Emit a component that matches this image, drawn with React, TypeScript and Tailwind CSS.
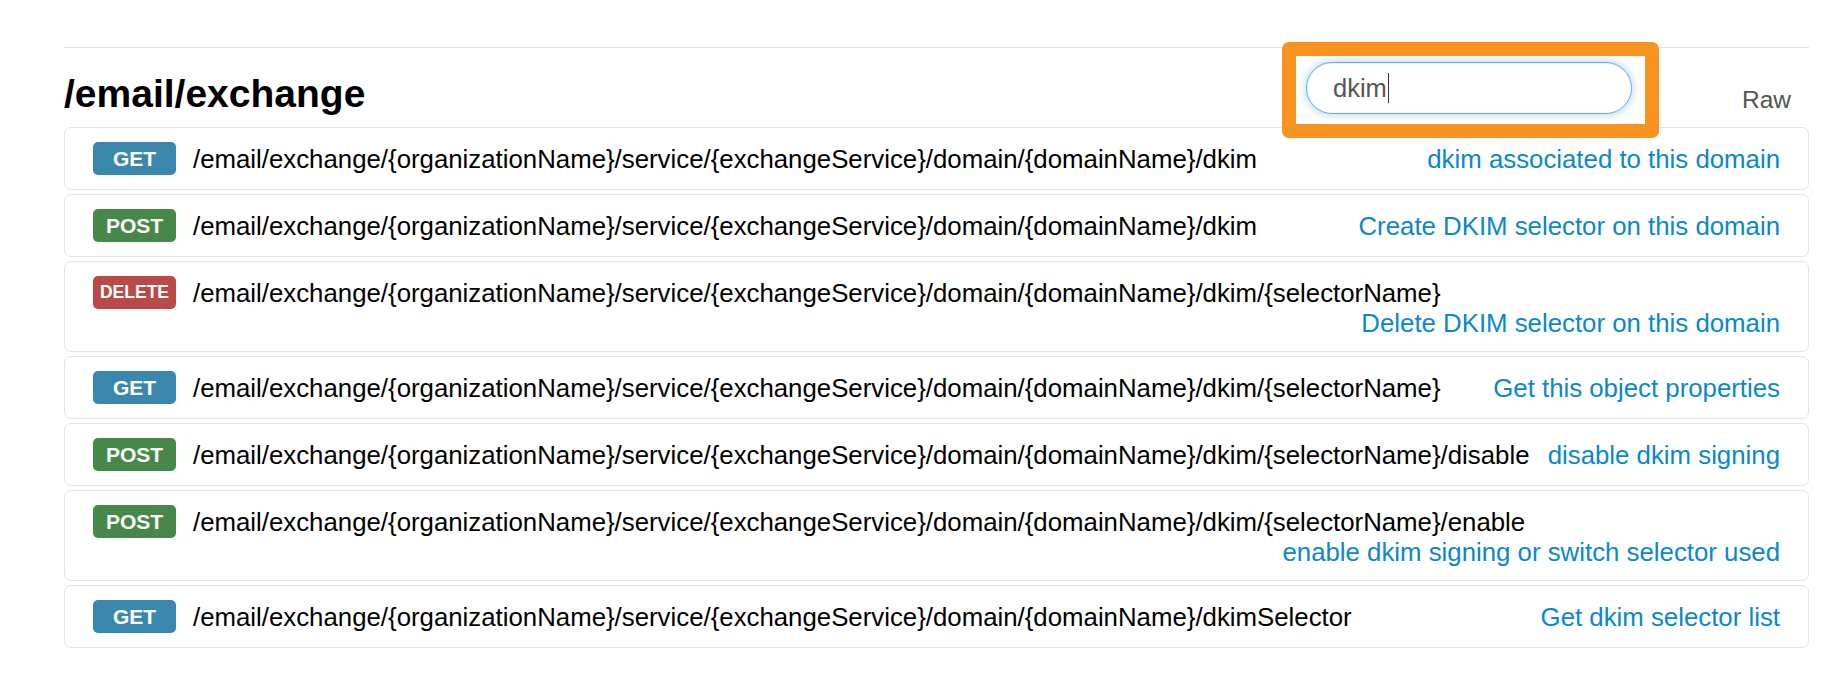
const base = "/email/exchange/{organizationName}/service/{exchangeService}/domain/{domainName}";

const endpoints = [
  { method: "GET", path: `${base}/dkim`, desc: "dkim associated to this domain" },
  { method: "POST", path: `${base}/dkim`, desc: "Create DKIM selector on this domain" },
  { method: "DELETE", path: `${base}/dkim/{selectorName}`, desc: "Delete DKIM selector on this domain" },
  { method: "GET", path: `${base}/dkim/{selectorName}`, desc: "Get this object properties" },
  { method: "POST", path: `${base}/dkim/{selectorName}/disable`, desc: "disable dkim signing" },
  { method: "POST", path: `${base}/dkim/{selectorName}/enable`, desc: "enable dkim signing or switch selector used" },
  { method: "GET", path: `${base}/dkimSelector`, desc: "Get dkim selector list" },
];

const methodStyles: Record<string, string> = {
  GET: "bg-[#3a87ad] text-[21px]",
  POST: "bg-[#468847] text-[21px]",
  DELETE: "bg-[#b94a48] text-[17.5px]",
};

const MethodBadge = ({ method }: { method: string }) => (
  <span
    className={`w-[83px] h-[33px] rounded-[5px] flex items-center justify-center shrink-0 text-white font-bold leading-none ${methodStyles[method]}`}
  >
    {method}
  </span>
);

const SearchBox = () => (
  <div className="relative mt-[14px]">
    <div className="w-[326px] h-[52px] rounded-full border border-[#66afe9] bg-white pl-[26px] flex items-center shadow-[0_0_8px_rgba(102,175,233,0.6),inset_0_1px_1px_rgba(0,0,0,0.075)]">
      <span className="text-[25.5px] text-[#555] leading-[30px]">dkim</span>
      <span className="inline-block w-px h-[30px] bg-[#333] ml-[1px]"></span>
    </div>
    {/* highlight frame drawn over the search field */}
    <div className="absolute -left-[24px] -top-[20px] w-[377px] h-[96px] border-[14px] border-[#f7931e] rounded-[7px] pointer-events-none"></div>
  </div>
);

export default function App() {
  return (
    <div className="w-full min-h-[674px] bg-white font-['Liberation_Sans',Arial,sans-serif] text-black">
      <div className="ml-[64px] w-[1745px] pt-[47px]">
        <div className="border-t border-[#e2e2e2]"></div>

        <div className="h-[79px] flex justify-between">
          <h1 className="pt-[24px] text-[39px] leading-[44px] font-bold">/email/exchange</h1>
          <div className="flex items-start pr-[18px]">
            <SearchBox />
            <span className="ml-[110px] mt-[37.5px] text-[24.5px] leading-[28px] text-[#555]">Raw</span>
          </div>
        </div>

        <div className="flex flex-col gap-[4px]">
          {endpoints.map((ep, i) => (
            <div key={i} className="border border-[#e4e4e4] rounded-[7px] px-[28px] py-[14px] flex flex-wrap items-center">
              <MethodBadge method={ep.method} />
              <span className="ml-[17px] text-[25.8px] leading-[28px] whitespace-nowrap">{ep.path}</span>
              <span className="ml-auto text-[25.8px] leading-[28px] text-[#0a88cb] whitespace-nowrap">{ep.desc}</span>
            </div>
          ))}
        </div>
      </div>
    </div>
  );
}
